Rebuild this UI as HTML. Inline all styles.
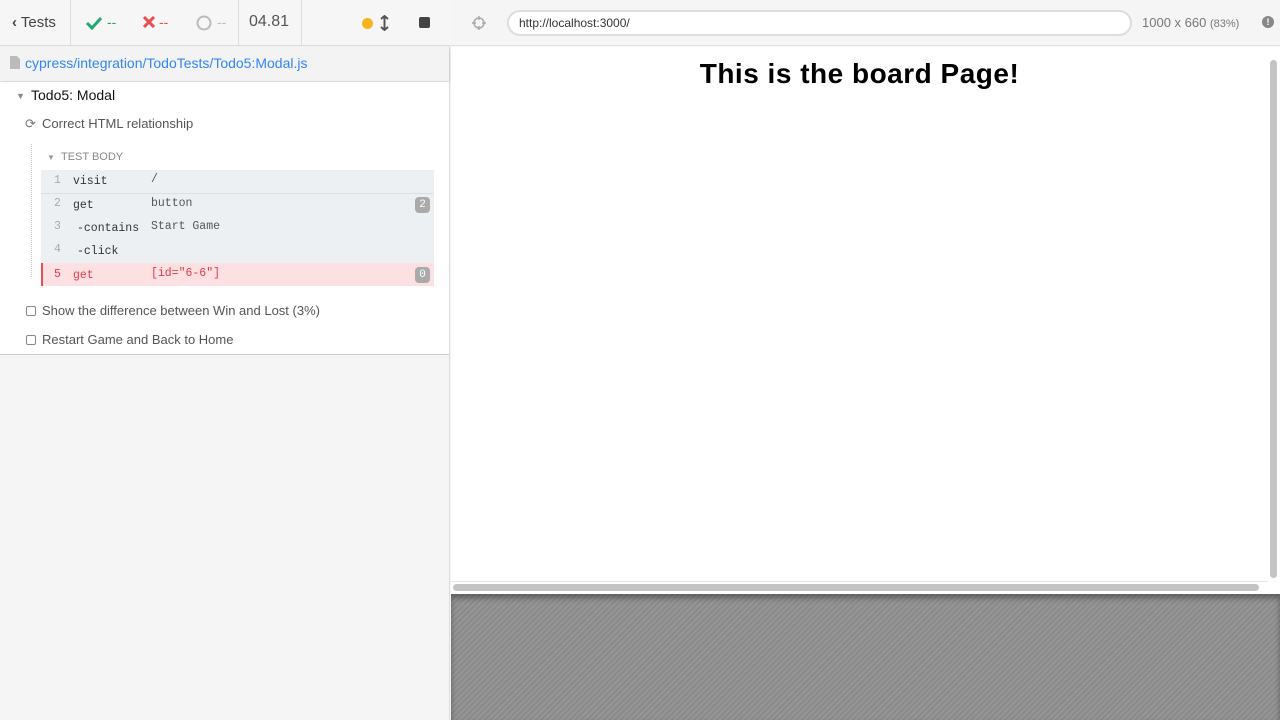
<!DOCTYPE html>
<html><head><style>
*{box-sizing:border-box;margin:0;padding:0}
body{width:1280px;height:720px;overflow:hidden;font-family:"Liberation Sans",sans-serif;background:#f5f5f5;position:relative}
.abs{position:absolute}
.mono{font-family:"Liberation Mono",monospace;font-size:11.5px}
</style></head><body>
<div class="abs" style="left:0;top:0;width:450px;height:720px;background:#f5f5f5;border-right:1px solid #ddd"></div>
<div class="abs" style="left:0;top:0;width:450px;height:46px;background:#f6f6f6;border-bottom:1px solid #ddd"></div>
<div class="abs" style="left:70px;top:0;width:1px;height:46px;background:#ddd"></div>
<div class="abs" style="left:238px;top:0;width:1px;height:46px;background:#ddd"></div>
<div class="abs" style="left:301px;top:0;width:1px;height:46px;background:#ddd"></div>
<div class="abs" style="left:12px;top:14px;font-size:15px;color:#444"><span style="font-weight:bold">&lsaquo;</span> Tests</div>
<svg class="abs" style="left:85px;top:16px" width="18" height="14"><path d="M2 7 L7 12 L16 2" stroke="#1fa971" stroke-width="3" fill="none"/></svg>
<div class="abs" style="left:107px;top:14px;font-size:14px;color:#1fa971">--</div>
<svg class="abs" style="left:143px;top:16px" width="12" height="12"><path d="M1 1L11 11M11 1L1 11" stroke="#e94f4f" stroke-width="3"/></svg>
<div class="abs" style="left:159px;top:14px;font-size:14px;color:#e94f4f">--</div>
<svg class="abs" style="left:196px;top:15px" width="16" height="16"><circle cx="8" cy="8" r="6.5" stroke="#bbb" stroke-width="2" fill="none"/></svg>
<div class="abs" style="left:217px;top:14px;font-size:14px;color:#bbb">--</div>
<div class="abs" style="left:249px;top:13px;font-size:16px;color:#555">04.81</div>
<div class="abs" style="left:362px;top:18px;width:11px;height:11px;border-radius:50%;background:#f8b31d"></div>
<svg class="abs" style="left:380px;top:15px" width="9" height="16"><path d="M4.5 1V15M1 4L4.5 1L8 4M1 12L4.5 15L8 12" stroke="#555" stroke-width="2" fill="none"/></svg>
<div class="abs" style="left:419px;top:17px;width:11px;height:11px;border-radius:2px;background:#444"></div>
<div class="abs" style="left:0;top:47px;width:449px;height:34px;background:#f3f3f3;box-shadow:0 2px 4px rgba(0,0,0,.15)"></div>
<svg class="abs" style="left:10px;top:56px" width="10" height="13"><path d="M0 0H7L10 3V13H0Z" fill="#bbb"/></svg>
<div class="abs" style="left:25px;top:55px;font-size:14px;color:#3386f7">cypress/integration/TodoTests/Todo5:Modal.js</div>
<div class="abs" style="left:0;top:82px;width:449px;height:273px;background:#fff;border-bottom:1px solid #ccc"></div>
<div class="abs" style="left:16px;top:91px;font-size:9px;color:#888">▼</div>
<div class="abs" style="left:31px;top:87px;font-size:14px;color:#111">Todo5: Modal</div>
<div class="abs" style="left:25px;top:116px;font-size:13px;color:#777">⟳</div>
<div class="abs" style="left:42px;top:116px;font-size:13px;color:#555">Correct HTML relationship</div>
<div class="abs" style="left:31px;top:144px;width:0;height:133px;border-left:1px dotted #ccc"></div>
<div class="abs" style="left:47px;top:153px;font-size:8px;color:#999">▼</div>
<div class="abs" style="left:61px;top:151px;font-size:11px;color:#888">TEST BODY</div>
<div class="abs" style="left:41px;top:170px;width:393px;height:93px;background:#edf0f3"></div>
<div class="abs" style="left:41px;top:193px;width:393px;height:1px;background:#dde0e3"></div>
<div class="abs" style="left:41px;top:263px;width:393px;height:23px;background:#fde0e2;border-left:2px solid #e94f4f"></div>
<div class="abs mono" style="left:54px;top:174px;color:#aaa">1</div><div class="abs mono" style="left:73px;top:175px;color:#333">visit</div><div class="abs mono" style="left:151px;top:173px;color:#555">/</div>
<div class="abs mono" style="left:54px;top:197px;color:#aaa">2</div><div class="abs mono" style="left:73px;top:199px;color:#333">get</div><div class="abs mono" style="left:151px;top:197px;color:#555">button</div>
<div class="abs mono" style="left:415px;top:197px;width:15px;height:16px;border-radius:4px;background:#aaa;color:#fff;text-align:center;line-height:16px;font-size:11px">2</div>
<div class="abs mono" style="left:54px;top:220px;color:#aaa">3</div><div class="abs mono" style="left:77px;top:222px;color:#333">-contains</div><div class="abs mono" style="left:151px;top:220px;color:#555">Start Game</div>
<div class="abs mono" style="left:54px;top:243px;color:#aaa">4</div><div class="abs mono" style="left:77px;top:245px;color:#333">-click</div>
<div class="abs mono" style="left:54px;top:268px;color:#e03b48">5</div><div class="abs mono" style="left:73px;top:269px;color:#e03b48">get</div><div class="abs mono" style="left:151px;top:267px;color:#e03b48">[id="6-6"]</div>
<div class="abs mono" style="left:415px;top:267px;width:15px;height:16px;border-radius:4px;background:#aaa;color:#fff;text-align:center;line-height:16px;font-size:11px">0</div>
<div class="abs" style="left:26px;top:306px;width:10px;height:10px;border:1px solid #888;border-radius:2px"></div>
<div class="abs" style="left:42px;top:303px;font-size:13px;color:#555">Show the difference between Win and Lost (3%)</div>
<div class="abs" style="left:26px;top:335px;width:10px;height:10px;border:1px solid #888;border-radius:2px"></div>
<div class="abs" style="left:42px;top:332px;font-size:13px;color:#555">Restart Game and Back to Home</div>
<div class="abs" style="left:451px;top:0;width:829px;height:46px;background:#f5f5f5;border-bottom:1px solid #e0e0e0"></div>
<svg class="abs" style="left:471px;top:15px" width="16" height="16"><circle cx="8" cy="8" r="5" stroke="#aaa" stroke-width="1.5" fill="none"/><path d="M8 1V5M8 11V15M1 8H5M11 8H15" stroke="#aaa" stroke-width="1.5"/></svg>
<div class="abs" style="left:507px;top:10px;width:625px;height:26px;border:2px solid #ddd;border-radius:13px;background:#fff;font-size:12px;color:#333;padding:4px 0 0 10px">http://localhost:3000/</div>
<div class="abs" style="left:1142px;top:15px;font-size:13px;color:#777">1000 x 660 <span style="font-size:11px">(83%)</span></div>
<div class="abs" style="left:1262px;top:16px;width:12px;height:12px;border-radius:50%;background:#888;color:#fff;font-size:9px;text-align:center;line-height:12px;font-weight:bold">!</div>
<div class="abs" style="left:451px;top:47px;width:829px;height:547px;background:#fff"></div>
<div class="abs" style="left:451px;top:58px;width:817px;text-align:center;font-size:28px;font-weight:bold;color:#000;letter-spacing:0.5px">This is the board Page!</div>
<div class="abs" style="left:1270px;top:60px;width:7px;height:518px;border-radius:4px;background:#c4c4c4"></div>
<div class="abs" style="left:451px;top:581px;width:817px;height:1px;background:#e6e6e6"></div>
<div class="abs" style="left:453px;top:584px;width:806px;height:7px;border-radius:4px;background:#c4c4c4"></div>
<div class="abs" style="left:451px;top:594px;width:829px;height:126px;background:repeating-linear-gradient(135deg,#8a8a8a 0 2px,#969696 2px 4px);box-shadow:inset 0 4px 6px rgba(0,0,0,.35)"></div>
</body></html>
